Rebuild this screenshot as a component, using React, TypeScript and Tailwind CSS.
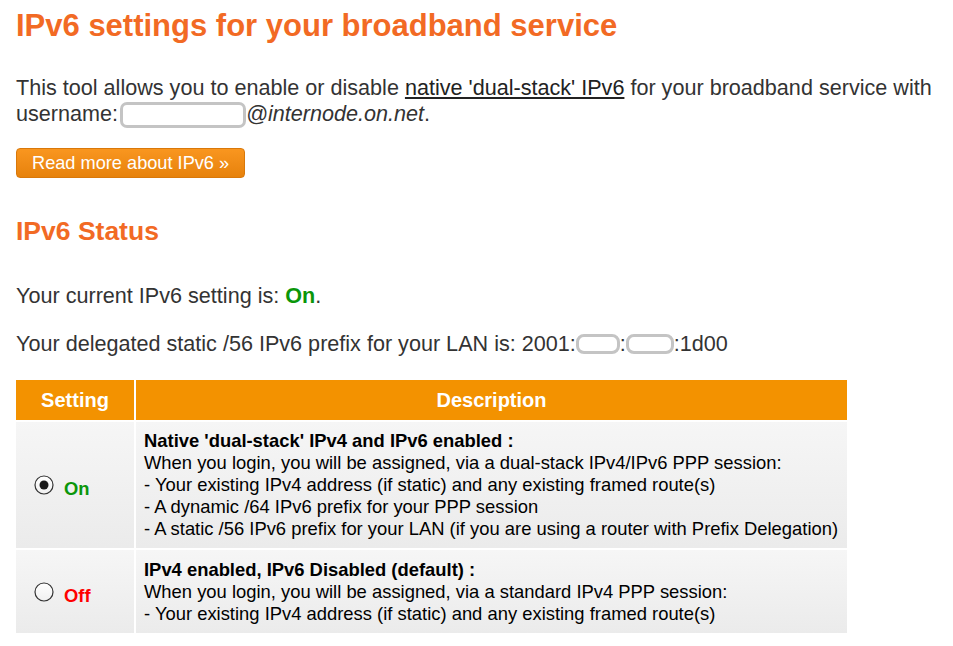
import React from "react";

const Redacted = ({ className }: { className: string }) => (
  <span className={`inline-block align-middle rounded-[7px] border-[3px] border-[#c4c4c4] bg-white ${className}`} />
);

const Radio = ({ checked }: { checked: boolean }) => (
  <svg width="20" height="20" viewBox="0 0 20 20" className="shrink-0">
    <defs>
      <linearGradient id={checked ? "rg1" : "rg2"} x1="0" y1="0" x2="0" y2="1">
        <stop offset="0" stopColor="#ffffff" />
        <stop offset="1" stopColor="#f0f0f0" />
      </linearGradient>
    </defs>
    <circle cx="10" cy="10" r="9" fill={`url(#${checked ? "rg1" : "rg2"})`} stroke="#333" strokeWidth="1.2" />
    {checked && <circle cx="10" cy="10" r="4.5" fill="#1a1a1a" />}
  </svg>
);

export default function App() {
  return (
    <div className="min-h-screen bg-white px-[16px] font-['Liberation_Sans',Arial,sans-serif] text-[#333]">
      <h1 className="pt-[6px] text-[31px] font-bold leading-[40px] text-[#f26a24]">
        IPv6 settings for your broadband service
      </h1>

      <p className="mt-[29px] text-[21.6px] leading-[26px]">
        This tool allows you to enable or disable{" "}
        <a className="text-[#222] underline">native 'dual-stack' IPv6</a> for your broadband service with
        username:<Redacted className="ml-[2px] h-[26px] w-[126px]" />
        <i>@internode.on.net</i>.
      </p>

      <button className="mt-[20px] h-[30px] rounded-[4px] border border-[#d9780a] bg-gradient-to-b from-[#f9961f] to-[#e7820b] px-[15px] text-[18.2px] leading-[28px] text-white">
        Read more about IPv6 »
      </button>

      <h2 className="mt-[37px] text-[26.5px] font-bold leading-[32px] text-[#f26a24]">IPv6 Status</h2>

      <p className="mt-[36px] text-[21.6px] leading-[26px]">
        Your current IPv6 setting is: <b className="text-[#0a960a]">On</b>.
      </p>
      <p className="mt-[22px] text-[21.6px] leading-[26px]">
        Your delegated static /56 IPv6 prefix for your LAN is: 2001:
        <Redacted className="h-[20px] w-[44px] -mt-[3px] rounded-[8px]" />:
        <Redacted className="h-[20px] w-[48px] -mt-[3px] rounded-[8px]" />:1d00
      </p>

      <div className="mt-[23px] grid w-[831px] grid-cols-[118px_1fr] gap-[2px] text-[18.4px] leading-[22px] text-black">
        <div className="flex h-[40px] items-center justify-center bg-[#f39200] text-[20px] font-bold text-white">
          Setting
        </div>
        <div className="flex h-[40px] items-center justify-center bg-[#f39200] text-[20px] font-bold text-white">
          Description
        </div>

        <div className="flex h-[126px] items-center gap-[10px] bg-gradient-to-b from-[#f6f6f6] to-[#ebebeb] pl-[18px]">
          <Radio checked />
          <b className="mt-[8px] text-[#0a960a]">On</b>
        </div>
        <div className="flex h-[126px] flex-col justify-center bg-gradient-to-b from-[#f6f6f6] to-[#ebebeb] pl-[8px]">
          <b>Native 'dual-stack' IPv4 and IPv6 enabled :</b>
          <span>When you login, you will be assigned, via a dual-stack IPv4/IPv6 PPP session:</span>
          <span>- Your existing IPv4 address (if static) and any existing framed route(s)</span>
          <span>- A dynamic /64 IPv6 prefix for your PPP session</span>
          <span>- A static /56 IPv6 prefix for your LAN (if you are using a router with Prefix Delegation)</span>
        </div>

        <div className="flex h-[83px] items-center gap-[10px] bg-gradient-to-b from-[#f6f6f6] to-[#ebebeb] pl-[18px]">
          <Radio checked={false} />
          <b className="mt-[8px] text-[#ff0000]">Off</b>
        </div>
        <div className="flex h-[83px] flex-col justify-center bg-gradient-to-b from-[#f6f6f6] to-[#ebebeb] pl-[8px]">
          <b>IPv4 enabled, IPv6 Disabled (default) :</b>
          <span>When you login, you will be assigned, via a standard IPv4 PPP session:</span>
          <span>- Your existing IPv4 address (if static) and any existing framed route(s)</span>
        </div>
      </div>
    </div>
  );
}
